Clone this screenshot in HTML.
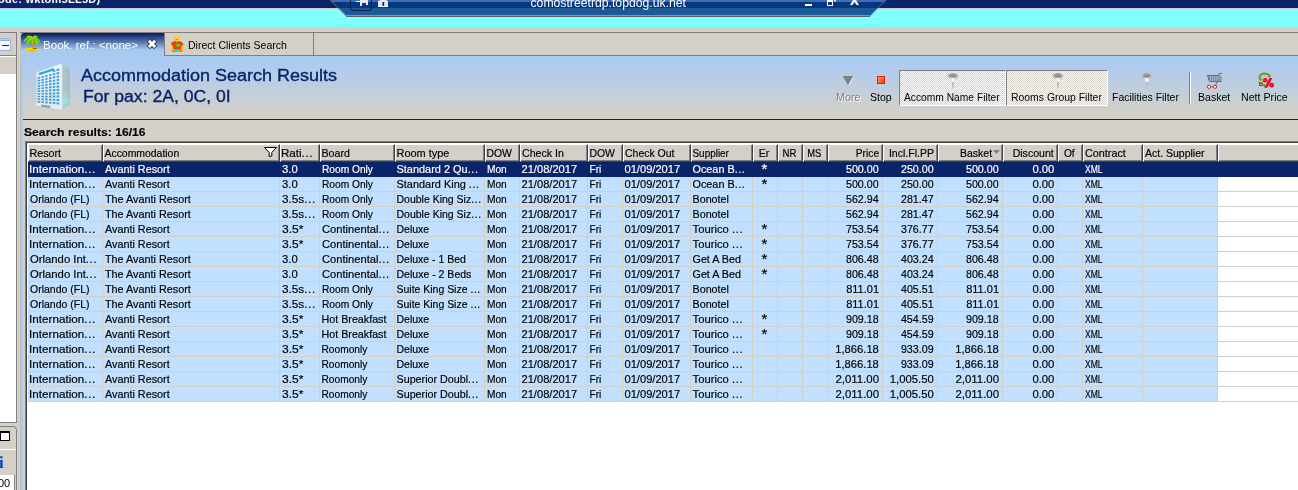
<!DOCTYPE html>
<html>
<head>
<meta charset="utf-8">
<title>Accommodation Search Results</title>
<style>
html,body{margin:0;padding:0;}
body{width:1298px;height:490px;overflow:hidden;position:relative;background:#d4d0c8;font-family:"Liberation Sans",sans-serif;font-size:11px;color:#000;}
.abs{position:absolute;}
.nw{white-space:nowrap;}
#navy{left:0;top:0;width:1298px;height:8px;background:#0a246a;}
#cyan{left:0;top:8px;width:1298px;height:19px;background:#80ffff;border-top:1px solid #c4ccd8;box-sizing:border-box;}
#titletxt{left:-2px;top:-7px;color:#fff;font-weight:bold;font-size:11px;line-height:13px;white-space:nowrap;letter-spacing:0.25px;}
/* left panel */
#lp-top{left:0;top:32px;width:16px;height:1px;background:#808080;}
#lp-right{left:16px;top:32px;width:1px;height:391px;background:#808080;}
#lp-white{left:0;top:74px;width:16px;height:348px;background:#fff;}
#lp-l55{left:0;top:55px;width:16px;height:1px;background:#808080;}
#lp-l56{left:0;top:56px;width:16px;height:1px;background:#fff;}
#lp-whitebot{left:0;top:422px;width:17px;height:1px;background:#808080;}
#lp2{left:-1px;top:426px;width:16px;height:70px;border:1px solid #808080;border-radius:0 4px 0 0;background:#d4d0c8;}
#lp2line{left:0;top:449px;width:16px;height:1px;background:#fff;}
#lp2i{left:-1px;top:454px;font-family:"Liberation Serif",serif;font-weight:bold;font-size:17px;color:#0046c8;line-height:18px;}
#lp2box{left:0;top:475px;width:14px;height:15px;background:#fff;border-right:1px solid #808080;}
#lp2txt{left:-2px;top:477px;font-size:11px;line-height:13px;}
/* splitter & content border */
#bluestrip{left:21px;top:50px;width:2px;height:440px;background:#a6caf0;}
#tbl-l1{left:25px;top:141px;width:1px;height:349px;background:#808080;}
#tbl-l2{left:26px;top:142px;width:1px;height:348px;background:#404040;}
#tbl-t1{left:25px;top:141px;width:1273px;height:1px;background:#808080;}
#tbl-t2{left:26px;top:142px;width:1272px;height:1px;background:#404040;}
#tblbg{left:27px;top:143px;width:1271px;height:347px;background:#fff;}
/* tab strip */
#tabline-top{left:20px;top:32px;width:1278px;height:1px;background:#808080;}
#tabline-bot{left:164px;top:55px;width:1134px;height:1px;background:#808080;}
#tab1{left:21px;top:33px;width:143px;height:23px;background:linear-gradient(#0a246a 0px,#0a246a 1px,#a6caf0 17px,#a6caf0 23px);border-radius:3px 0 0 0;color:#fff;}
#tab1 span{position:absolute;left:22px;top:6px;white-space:nowrap;line-height:13px;transform-origin:0 50%;transform:scaleX(1.05);}
#tab2l{left:164px;top:33px;width:1px;height:23px;background:#808080;}
#tab2r{left:313px;top:33px;width:1px;height:23px;background:#808080;}
#tab2 {left:188px;top:39px;white-space:nowrap;line-height:13px;transform-origin:0 50%;transform:scaleX(0.957);}
/* header */
#hdr{left:21px;top:56px;width:1277px;height:63px;background:linear-gradient(#a6caf0 0px,#abcbf3 6px,#d4d0c8 58px,#d4d0c8 63px);}
#hdrline{left:23px;top:119px;width:1275px;height:1px;background:#0a246a;}
#h1{left:81px;top:67px;font-size:16px;line-height:18px;color:#0a246a;white-space:nowrap;transform-origin:0 50%;transform:scaleX(1.125);word-spacing:0px;-webkit-text-stroke:0.35px #0a246a;}
#h2{left:82.5px;top:87.5px;font-size:16px;line-height:18px;color:#0a246a;white-space:nowrap;transform-origin:0 50%;transform:scaleX(1.10);-webkit-text-stroke:0.35px #0a246a;}
.tb{position:absolute;top:91px;white-space:nowrap;font-size:11px;line-height:13px;transform-origin:0 50%;}
.tbox{position:absolute;top:70px;height:36px;border:1px solid #fff;border-top-color:#808080;border-left-color:#808080;background:conic-gradient(#fff 25%,#d4d0c8 0 50%,#fff 0 75%,#d4d0c8 0) 0 0/2px 2px;box-sizing:border-box;}
#sr{left:24px;top:126px;font-weight:bold;white-space:nowrap;line-height:13px;transform-origin:0 50%;transform:scaleX(1.105);-webkit-text-stroke:0.15px #000;}
/* table */
#thead{left:28px;top:144px;width:1270px;height:18px;}
.th{position:absolute;top:0;height:18px;box-sizing:border-box;background:#d4d0c8;border-right:1px solid #404040;border-bottom:1px solid #404040;border-left:1px solid #fff;border-top:1px solid #fff;line-height:13px;white-space:nowrap;overflow:hidden;}
.th i{position:absolute;right:0;bottom:0;top:0;width:1px;background:#808080;}
.th b{position:absolute;left:0;right:0;bottom:0;height:1px;background:#808080;}
.th .hl{position:absolute;left:1px;right:3px;top:2px;}
.t{display:inline-block;white-space:nowrap;-webkit-text-stroke:0.18px currentColor;}
.t u{text-decoration:none;letter-spacing:0.6px;}
.r{position:absolute;left:28px;width:1190px;height:15px;background:#c1e0ff;white-space:nowrap;}
.r.sel{background:#0a246a;color:#fff;width:1270px;}
.c{position:absolute;top:0;height:15px;line-height:14px;box-sizing:border-box;padding:0 3px 0 2px;overflow:hidden;white-space:nowrap;border-right:1px solid #d4d0c8;border-bottom:1px solid #d4d0c8;}
.r.sel .c{border-color:#0a246a;}
.num{text-align:right;}
.er{text-align:center;}
.er .t{font-size:15px;line-height:14px;position:relative;top:0px;}
.gl{position:absolute;left:1218px;width:80px;height:1px;background:#d4d0c8;}
</style>
</head>
<body>
<div id="root" style="position:absolute;left:0;top:0;width:1298px;height:490px;overflow:hidden;will-change:transform;">
<div class="abs" id="cyan"></div>
<div class="abs" id="navy"></div>
<div class="abs" id="titletxt">ode: wktom5LL5D)</div>
<svg class="abs" style="left:326px;top:0" width="566" height="18" viewBox="326 0 566 18">
  <polygon points="330.5,0 886,0 869.7,16.5 346.5,16.5" fill="#1b5a99"/>
  <polygon points="330.5,0 886,0 884,2 332.5,2" fill="#3a6eb5"/>
  <polygon points="332.5,2 884,2 878,8 338.5,8" fill="#08367f"/>
  <polyline points="345.5,15.5 870.5,15.5" fill="none" stroke="#6c9bd0" stroke-width="1"/>
  <polyline points="330,0 346.5,16.5 869.7,16.5 886.2,0" fill="none" stroke="#5a6068" stroke-width="1"/>
  <polyline points="338.5,8 346,15.5" fill="none" stroke="#9fc0e8" stroke-width="0.8"/>
  <polyline points="878,8 870.5,15.5" fill="none" stroke="#9fc0e8" stroke-width="0.8"/>
  <!-- pin button -->
  <rect x="350.5" y="-4" width="21" height="14.5" rx="2.5" fill="none" stroke="#071c4a" stroke-width="1"/>
  <rect x="356" y="1" width="4" height="1" fill="#fff"/>
  <path d="M360 0 H368 V5 H366 V3 H362 V6 H360 Z" fill="#e8ebf5"/>
  <!-- lock -->
  <path d="M378 1 H388 V7 H378 Z" fill="#e4e7f2"/>
  <rect x="378" y="6" width="10" height="1" fill="#fff"/>
  <rect x="379.5" y="0" width="7.5" height="1" fill="#e4e7f2"/>
  <rect x="382.4" y="2" width="1.8" height="4" fill="#0a2a80"/>
  <!-- minimise -->
  <rect x="805" y="4" width="7" height="2" fill="#fff"/>
  <!-- restore -->
  <path d="M827 0 H833 V6 H827 Z M828 2 V5 H832 V2 Z" fill="#fff" fill-rule="evenodd"/>
  <path d="M834 0 H836 V1.5 H834 Z" fill="#e8ebf5"/>
  <!-- close -->
  <path d="M853 0 L850 5 H852.5 L854.5 2 L856.5 5 H859 L856 0 Z" fill="#f0f2f8"/>
  <text x="530.5" y="7" fill="#fff" font-family="Liberation Sans, sans-serif" font-size="12.2" textLength="155.5" lengthAdjust="spacing">comostreetrdp.topdog.uk.net</text>
</svg>


<div class="abs" id="lp-top"></div>
<div class="abs" id="lp-white"></div>
<div class="abs" id="lp-l55"></div>
<div class="abs" id="lp-l56"></div>
<div class="abs" id="lp-right"></div>
<div class="abs" id="lp-whitebot"></div>
<div class="abs" id="lp2"></div>
<div class="abs" id="lp2line"></div>
<div class="abs" id="lp2i">i</div>
<div class="abs" id="lp2box"></div>
<div class="abs" id="lp2txt">00</div>
<!-- left panel: minimize-ish button -->
<div class="abs" style="left:-1px;top:38px;width:10px;height:9px;background:#b4d0f0;border:1px solid #98b8e0;"></div>
<div class="abs" style="left:0px;top:40px;width:10px;height:9px;background:#f4f8ff;border:1px solid #98b0d8;border-left:none;"></div>
<div class="abs" style="left:2px;top:45px;width:7px;height:1px;background:#0a246a;"></div>
<!-- restore icon -->
<div class="abs" style="left:0px;top:431px;width:8px;height:7px;background:#fff;border:1px solid #000;border-top-width:2px;"></div>


<div class="abs" id="tabline-top"></div>
<div class="abs" id="tabline-bot"></div>
<div class="abs" id="hdr"></div>
<div class="abs" id="bluestrip"></div>
<div class="abs" style="left:20px;top:35px;width:1px;height:455px;background:#c0beb8;"></div>
<div class="abs" id="tab1"><span>Book. ref.: &lt;none&gt;</span></div>
<div class="abs" id="tab2l"></div>
<div class="abs" id="tab2r"></div>
<div class="abs" id="tab2">Direct Clients Search</div>
<svg class="abs" style="left:23px;top:34px" width="18" height="19" viewBox="23 34 18 19">
  <!-- island -->
  <ellipse cx="32" cy="49.8" rx="7.2" ry="2.1" fill="#ffd800"/>
  <ellipse cx="32" cy="50.6" rx="5" ry="1.4" fill="#f4c000"/>
  <!-- trunk -->
  <path d="M31.6 40 C32.2 43 33 46 32.6 49 L34.2 49 C34.6 46 33.8 43 33.4 40 Z" fill="#f0a810"/>
  <rect x="33" y="43.5" width="1" height="1" fill="#a04808"/>
  <rect x="32.4" y="46" width="1" height="1" fill="#a04808"/>
  <rect x="33" y="48" width="1" height="1" fill="#a04808"/>
  <rect x="34.5" y="48" width="2" height="1" fill="#704010"/>
  <!-- fronds -->
  <g fill="none" stroke-linecap="round">
    <path d="M32.5 38.5 C29 37 26 38.5 24.6 41" stroke="#6fd010" stroke-width="1.9"/>
    <path d="M32.2 39 C29.5 39 27.6 41 27.4 43.8" stroke="#8be000" stroke-width="1.9"/>
    <path d="M32.5 39 C31 40.5 30.6 42 30.8 43.4" stroke="#6fd010" stroke-width="1.6"/>
    <path d="M33 38.5 C36 37.2 38.6 39 39.6 42.4" stroke="#6fd010" stroke-width="1.9"/>
    <path d="M33.2 39.2 C35.4 39.6 37 41.4 37.4 44" stroke="#8be000" stroke-width="1.9"/>
    <path d="M33.2 39.4 C34.4 40.6 34.8 42 34.6 43.2" stroke="#58c010" stroke-width="1.5"/>
    <path d="M27.6 36.6 C29.6 36.2 31.6 36.8 32.8 38.2" stroke="#8be000" stroke-width="1.7"/>
    <path d="M33 38 C33.6 36.6 35.4 36.2 36.6 36.6" stroke="#8be000" stroke-width="1.7"/>
  </g>
</svg>
<!-- tab close X -->
<svg class="abs" style="left:145px;top:37px" width="14" height="14" viewBox="145 37 14 14">
  <g transform="translate(152 43.9)">
    <rect x="-5" y="-2.2" width="10" height="4.4" fill="#2c2c34" transform="rotate(45)"/>
    <rect x="-5" y="-2.2" width="10" height="4.4" fill="#2c2c34" transform="rotate(-45)"/>
    <rect x="-4.4" y="-1.4" width="8.8" height="2.8" fill="#fff" transform="rotate(45)"/>
    <rect x="-4.4" y="-1.4" width="8.8" height="2.8" fill="#fff" transform="rotate(-45)"/>
  </g>
</svg>
<!-- person icon -->
<svg class="abs" style="left:169px;top:35px" width="17" height="18" viewBox="169 35 17 18">
  <path d="M171 44.5 C171 42 173.5 41 176.8 41 C180 41 183.2 42 183.3 44.5 L182.5 51.5 H172 Z" fill="#f83c00"/>
  <path d="M170.2 46 C170.2 44.6 172.4 44.4 172.6 45.6 L174 50.4 L172.2 50.8 Z" fill="#ffd000"/>
  <path d="M184.3 46 C184.3 44.6 182 44.4 181.8 45.6 L180.4 50.4 L182.2 50.8 Z" fill="#ffd000"/>
  <rect x="176.3" y="44" width="3.9" height="2.6" fill="#30e040"/>
  <rect x="174" y="49.3" width="6" height="2.2" fill="#00e4f0"/>
  <rect x="176" y="40.2" width="1.6" height="2" fill="#ffb000"/>
  <circle cx="176.8" cy="38" r="2.5" fill="#ffc400"/>
  <circle cx="176.6" cy="37.4" r="1.1" fill="#fff0a0"/>
  <rect x="175.8" y="38.8" width="2" height="0.8" fill="#f06000"/>
</svg>

<div class="abs" id="hdrline"></div>
<svg class="abs" style="left:34px;top:62px" width="38" height="50" viewBox="34 62 38 50">
  <defs>
    <linearGradient id="bside" x1="0" y1="0" x2="1" y2="0">
      <stop offset="0" stop-color="#e4ecee"/><stop offset="0.3" stop-color="#b4c6cb"/><stop offset="1" stop-color="#a3bcc2"/>
    </linearGradient>
    <linearGradient id="bfront" x1="0" y1="0" x2="0" y2="1">
      <stop offset="0" stop-color="#eef3f6"/><stop offset="1" stop-color="#dde5e8"/>
    </linearGradient>
    <radialGradient id="bglow" cx="0.5" cy="0.5" r="0.5">
      <stop offset="0" stop-color="#9fe6ea" stop-opacity="0.95"/><stop offset="1" stop-color="#9fe6ea" stop-opacity="0"/>
    </radialGradient>
  </defs>
  <polygon points="60.3,64 69.8,68.6 69.8,104.6 60.3,110" fill="url(#bside)"/>
  <ellipse cx="65.5" cy="101" rx="5.5" ry="9" fill="url(#bglow)"/>
  <polygon points="60.3,64 61.6,64.6 61.6,109.3 60.3,110" fill="#f6fafb"/>
  <polygon points="36.5,72.5 60.3,64 60.3,110 36.5,106" fill="url(#bfront)"/>
  <polygon points="38.8,75.2 53.8,70.4 53.8,67.9 38.8,72.9" fill="#1fa8ec"/>
  <path d="M37.6 77.5 L40.1 76.8 L40.1 78.5 L37.6 79.0Z M37.6 80.1 L40.1 79.5 L40.1 81.1 L37.6 81.7Z M37.6 82.7 L40.1 82.2 L40.1 83.8 L37.6 84.3Z M37.6 85.3 L40.1 84.9 L40.1 86.5 L37.6 86.9Z M37.6 87.9 L40.1 87.6 L40.1 89.2 L37.6 89.5Z M37.6 90.5 L40.1 90.3 L40.1 91.9 L37.6 92.1Z M37.6 93.1 L40.1 93.0 L40.1 94.6 L37.6 94.7Z M37.6 95.7 L40.1 95.7 L40.1 97.3 L37.6 97.3Z M37.6 98.3 L40.1 98.4 L40.1 100.0 L37.6 99.9Z M37.6 100.9 L40.1 101.1 L40.1 102.7 L37.6 102.5Z M41.4 76.5 L43.9 75.9 L43.9 77.6 L41.4 78.1Z M41.4 79.2 L43.9 78.7 L43.9 80.4 L41.4 80.9Z M41.4 82.0 L43.9 81.5 L43.9 83.2 L41.4 83.6Z M41.4 84.7 L43.9 84.4 L43.9 86.1 L41.4 86.4Z M41.4 87.5 L43.9 87.2 L43.9 88.9 L41.4 89.1Z M41.4 90.2 L43.9 90.0 L43.9 91.7 L41.4 91.9Z M41.4 93.0 L43.9 92.8 L43.9 94.5 L41.4 94.6Z M41.4 95.7 L43.9 95.7 L43.9 97.4 L41.4 97.3Z M41.4 98.4 L43.9 98.5 L43.9 100.2 L41.4 100.1Z M41.4 101.2 L43.9 101.3 L43.9 103.0 L41.4 102.8Z M45.2 75.5 L47.7 74.9 L47.7 76.6 L45.2 77.2Z M45.2 78.4 L47.7 77.8 L47.7 79.6 L45.2 80.1Z M45.2 81.3 L47.7 80.8 L47.7 82.6 L45.2 83.0Z M45.2 84.2 L47.7 83.8 L47.7 85.6 L45.2 85.9Z M45.2 87.0 L47.7 86.8 L47.7 88.5 L45.2 88.8Z M45.2 89.9 L47.7 89.7 L47.7 91.5 L45.2 91.6Z M45.2 92.8 L47.7 92.7 L47.7 94.5 L45.2 94.5Z M45.2 95.7 L47.7 95.7 L47.7 97.4 L45.2 97.4Z M45.2 98.6 L47.7 98.6 L47.7 100.4 L45.2 100.3Z M45.2 101.4 L47.7 101.6 L47.7 103.4 L45.2 103.2Z M49.0 74.5 L51.5 73.9 L51.5 75.7 L49.0 76.3Z M49.0 77.5 L51.5 77.0 L51.5 78.9 L49.0 79.4Z M49.0 80.6 L51.5 80.1 L51.5 82.0 L49.0 82.4Z M49.0 83.6 L51.5 83.2 L51.5 85.1 L49.0 85.4Z M49.0 86.6 L51.5 86.3 L51.5 88.2 L49.0 88.4Z M49.0 89.6 L51.5 89.4 L51.5 91.3 L49.0 91.4Z M49.0 92.6 L51.5 92.5 L51.5 94.4 L49.0 94.5Z M49.0 95.7 L51.5 95.6 L51.5 97.5 L49.0 97.5Z M49.0 98.7 L51.5 98.8 L51.5 100.6 L49.0 100.5Z M49.0 101.7 L51.5 101.9 L51.5 103.7 L49.0 103.5Z M52.8 70.4 L55.3 69.6 L55.3 71.6 L52.8 72.3Z M52.8 73.5 L55.3 72.9 L55.3 74.8 L52.8 75.4Z M52.8 76.7 L55.3 76.1 L55.3 78.1 L52.8 78.6Z M52.8 79.9 L55.3 79.4 L55.3 81.3 L52.8 81.8Z M52.8 83.0 L55.3 82.6 L55.3 84.6 L52.8 84.9Z M52.8 86.2 L55.3 85.9 L55.3 87.8 L52.8 88.1Z M52.8 89.3 L55.3 89.1 L55.3 91.1 L52.8 91.2Z M52.8 92.5 L55.3 92.4 L55.3 94.3 L52.8 94.4Z M52.8 95.6 L55.3 95.6 L55.3 97.6 L52.8 97.5Z M52.8 98.8 L55.3 98.9 L55.3 100.8 L52.8 100.7Z M52.8 102.0 L55.3 102.1 L55.3 104.1 L52.8 103.8Z M56.6 69.3 L59.1 68.5 L59.1 70.6 L56.6 71.2Z M56.6 72.6 L59.1 71.9 L59.1 73.9 L56.6 74.5Z M56.6 75.9 L59.1 75.3 L59.1 77.3 L56.6 77.8Z M56.6 79.1 L59.1 78.7 L59.1 80.7 L56.6 81.1Z M56.6 82.4 L59.1 82.1 L59.1 84.1 L56.6 84.4Z M56.6 85.7 L59.1 85.5 L59.1 87.5 L56.6 87.7Z M56.6 89.0 L59.1 88.8 L59.1 90.9 L56.6 91.0Z M56.6 92.3 L59.1 92.2 L59.1 94.3 L56.6 94.3Z M56.6 95.6 L59.1 95.6 L59.1 97.6 L56.6 97.6Z M56.6 98.9 L59.1 99.0 L59.1 101.0 L56.6 100.9Z M56.6 102.2 L59.1 102.4 L59.1 104.4 L56.6 104.2Z" fill="#2f9ee6"/>
  <polygon points="36.5,103.6 60.3,106.8 60.3,110 36.5,106" fill="#e8eef0"/>
  <polygon points="41,104.6 50.5,106 50,108 41.5,106.5" fill="#8c979c"/>
  <polygon points="36.5,106 60.3,110 60.3,110.6 36.5,106.6" fill="#b0bcc0"/>
</svg>

<div class="abs" id="h1">Accommodation Search Results</div>
<div class="abs" id="h2">For pax: 2A, 0C, 0I</div>

<div class="tbox" style="left:899px;width:107px;"></div>
<div class="tbox" style="left:1006px;width:102px;"></div>
<div class="tb" style="left:836.5px;color:#fff;top:92px;transform:scaleX(0.98);">More</div>
<div class="tb" style="left:835.5px;color:#808080;transform:scaleX(0.98);">More</div>
<div class="tb" style="left:870px;transform:scaleX(0.96);">Stop</div>
<div class="tb" style="left:904px;transform:scaleX(0.932);">Accomm Name Filter</div>
<div class="tb" style="left:1011px;transform:scaleX(0.947);">Rooms Group Filter</div>
<div class="tb" style="left:1112px;transform:scaleX(0.952);">Facilities Filter</div>
<div class="tb" style="left:1198px;transform:scaleX(0.96);">Basket</div>
<div class="tb" style="left:1241px;transform:scaleX(0.968);">Nett Price</div>
<div class="abs" style="left:1189px;top:72px;width:1px;height:32px;background:#808080;"></div>
<div class="abs" style="left:1190px;top:72px;width:1px;height:32px;background:#fff;"></div>
<svg class="abs" style="left:840px;top:72px" width="440" height="18" viewBox="840 72 440 18">
  <defs>
    <linearGradient id="stopg" x1="0" y1="0" x2="1" y2="1">
      <stop offset="0" stop-color="#ff9a68"/><stop offset="1" stop-color="#f83808"/>
    </linearGradient>
    <linearGradient id="fcone" x1="0" y1="0" x2="1" y2="0">
      <stop offset="0" stop-color="#9a9a9a"/><stop offset="0.3" stop-color="#d8d8d8"/><stop offset="0.5" stop-color="#ffffff"/><stop offset="0.72" stop-color="#d0d0d0"/><stop offset="1" stop-color="#8c8c8c"/>
    </linearGradient>
    <linearGradient id="frim" x1="0" y1="0" x2="1" y2="0">
      <stop offset="0" stop-color="#c8c8c8"/><stop offset="0.5" stop-color="#9c9c9c"/><stop offset="1" stop-color="#d0d0d0"/>
    </linearGradient>
  </defs>
  <!-- more -->
  <path d="M843.6 77 L854.2 77 L849 86 Z" fill="#fff" opacity="0.5"/>
  <path d="M842.6 76 L853.2 76 L848 85.2 Z" fill="#808080"/>
  <!-- stop -->
  <rect x="877" y="76" width="8" height="8" fill="#e82000"/>
  <rect x="878" y="77" width="6" height="6" fill="url(#stopg)"/>
  <!-- funnels -->
  <g transform="translate(947.1 73)">
      <path d="M0.2 2.6 L4.7 9.6 L5.0 15.6 L6.6 15.6 L7.0 9.6 L11.6 2.6 Z" fill="url(#fcone)"/>
      <ellipse cx="5.9" cy="2.5" rx="5.8" ry="2.4" fill="url(#frim)"/>
      <ellipse cx="5.9" cy="2.8" rx="3.9" ry="1.4" fill="#8a8a8a" opacity="0.8"/>
      <path d="M5.1 9 L5.4 15.6 L6.4 15.6 L6.7 9 Z" fill="#a8a8a8"/>
  </g>
  <g transform="translate(1052.1 73)">
      <path d="M0.2 2.6 L4.7 9.6 L5.0 15.6 L6.6 15.6 L7.0 9.6 L11.6 2.6 Z" fill="url(#fcone)"/>
      <ellipse cx="5.9" cy="2.5" rx="5.8" ry="2.4" fill="url(#frim)"/>
      <ellipse cx="5.9" cy="2.8" rx="3.9" ry="1.4" fill="#8a8a8a" opacity="0.8"/>
      <path d="M5.1 9 L5.4 15.6 L6.4 15.6 L6.7 9 Z" fill="#a8a8a8"/>
  </g>
  <g transform="translate(1141 73)">
      <path d="M0.2 2.6 L4.7 9.6 L5.0 15.6 L6.6 15.6 L7.0 9.6 L11.6 2.6 Z" fill="url(#fcone)"/>
      <ellipse cx="5.9" cy="2.5" rx="5.8" ry="2.4" fill="url(#frim)"/>
      <ellipse cx="5.9" cy="2.8" rx="3.9" ry="1.4" fill="#8a8a8a" opacity="0.8"/>
      <path d="M5.1 9 L5.4 15.6 L6.4 15.6 L6.7 9 Z" fill="#a8a8a8"/>
  </g>
  <!-- basket cart -->
  <g fill="none" stroke="#6c6c6c" stroke-width="1">
    <path d="M1222 73.5 H1219 V81.5"/>
    <path d="M1207 75.5 H1219"/>
    <path d="M1207.6 75.5 L1209.4 81.5 H1221.3"/>
    <path d="M1209.5 76 V80 M1211.4 76 V81.5 M1213.3 76 V81.5 M1215.2 76 V81.5 M1217.1 76 V81.5 M1220.9 76 V81.5" stroke-width="0.9"/>
    <path d="M1217.5 81.5 L1215.6 85"/>
    <path d="M1211 86.7 H1213"/>
  </g>
  <circle cx="1209" cy="86.8" r="1.6" fill="#fff" stroke="#f00000" stroke-width="0.9"/>
  <circle cx="1215.1" cy="86.8" r="1.6" fill="#fff" stroke="#f00000" stroke-width="0.9"/>
  <!-- nett price -->
  <g fill="none" stroke-linecap="round">
    <path d="M1260.6 79.4 C1258.6 76.4 1261.4 73.8 1264.6 73.9 C1267 74 1268.6 75 1269.4 76.4" stroke="#6aa020" stroke-width="2.7"/>
    <path d="M1261.2 78 C1260.4 76.4 1262.4 75 1264.6 75.1 C1266 75.2 1267 75.6 1267.8 76.4" stroke="#b4d88c" stroke-width="1.1"/>
    <path d="M1258.6 82.4 H1262.6" stroke="#6aa020" stroke-width="1.2"/>
    <path d="M1264 84.6 C1264.2 86 1265 86.6 1266 86.6" stroke="#6aa020" stroke-width="1.8"/>
  </g>
  <rect x="1259" y="83.2" width="3.8" height="2.8" fill="#f00018"/>
  <rect x="1259.9" y="84.2" width="1.9" height="0.9" fill="#ffd0d0"/>
  <g fill="#f00018">
    <circle cx="1265.2" cy="80.2" r="2.3"/>
    <circle cx="1271.6" cy="85.2" r="2.4"/>
    <path d="M1269.6 78 L1272.4 78 L1267.2 87.7 L1264.4 87.7 Z"/>
  </g>
  <circle cx="1265.2" cy="80.2" r="0.7" fill="#ff6070"/>
  <circle cx="1271.6" cy="85.2" r="0.7" fill="#ff6070"/>
</svg>


<div class="abs" id="sr">Search results: 16/16</div>
<div class="abs" id="tbl-t1"></div>
<div class="abs" id="tbl-t2"></div>
<div class="abs" id="tbl-l1"></div>
<div class="abs" id="tbl-l2"></div>
<div class="abs" id="tblbg"></div>
<div class="abs" id="thead">
<div class="th" style="left:0px;width:75px;"><span class="hl" style=""><span class="t" style="transform-origin:0 50%;transform:translateX(-0.5px) scaleX(0.975);">Resort</span></span><i></i><b></b></div>
<div class="th" style="left:75px;width:177px;"><span class="hl" style=""><span class="t" style="transform-origin:0 50%;transform:translateX(-0.5px) scaleX(0.9468);">Accommodation</span></span><svg style="position:absolute;right:1px;top:2px" width="14" height="11" viewBox="0 0 14 11"><path d="M0.5 0.5 H12.5 L7.8 5.5 V9 L5.2 9.6 V5.5 Z" fill="#fff" stroke="#000" stroke-width="1"/></svg><i></i><b></b></div>
<div class="th" style="left:252px;width:40px;"><span class="hl" style=""><span class="t" style="transform-origin:0 50%;transform:translateX(-1.0px) scaleX(1.0536);">Rati<u>...</u></span></span><i></i><b></b></div>
<div class="th" style="left:292px;width:75px;"><span class="hl" style=""><span class="t" style="transform-origin:0 50%;transform:translateX(-0.5px) scaleX(0.9679);">Board</span></span><i></i><b></b></div>
<div class="th" style="left:367px;width:90px;"><span class="hl" style=""><span class="t" style="transform-origin:0 50%;transform:translateX(-0.5px) scaleX(0.9942);">Room type</span></span><i></i><b></b></div>
<div class="th" style="left:457px;width:35px;"><span class="hl" style=""><span class="t" style="transform-origin:0 50%;transform:translateX(-0.5px) scaleX(0.9462);">DOW</span></span><i></i><b></b></div>
<div class="th" style="left:492px;width:68px;"><span class="hl" style=""><span class="t" style="transform-origin:0 50%;transform:translateX(0.0px) scaleX(0.9674);">Check In</span></span><i></i><b></b></div>
<div class="th" style="left:560px;width:35px;"><span class="hl" style=""><span class="t" style="transform-origin:0 50%;transform:translateX(-0.5px) scaleX(0.9423);">DOW</span></span><i></i><b></b></div>
<div class="th" style="left:595px;width:68px;"><span class="hl" style=""><span class="t" style="transform-origin:0 50%;transform:translateX(0.0px) scaleX(0.9519);">Check Out</span></span><i></i><b></b></div>
<div class="th" style="left:663px;width:62px;"><span class="hl" style=""><span class="t" style="transform-origin:0 50%;transform:translateX(-0.5px) scaleX(0.9024);">Supplier</span></span><i></i><b></b></div>
<div class="th" style="left:725px;width:25px;"><span class="hl" style="text-align:center;"><span class="t" style="transform-origin:50% 50%;transform:translateX(-0.5px) scaleX(0.97);">Er</span></span><i></i><b></b></div>
<div class="th" style="left:750px;width:25px;"><span class="hl" style="text-align:center;"><span class="t" style="transform-origin:50% 50%;transform:translateX(-0.5px) scaleX(0.8733);">NR</span></span><i></i><b></b></div>
<div class="th" style="left:775px;width:25px;"><span class="hl" style="text-align:center;"><span class="t" style="transform-origin:50% 50%;transform:translateX(0.0px) scaleX(0.8562);">MS</span></span><i></i><b></b></div>
<div class="th" style="left:800px;width:55px;"><span class="hl" style="text-align:right;"><span class="t" style="transform-origin:100% 50%;transform:translateX(0.0px) scaleX(0.9292);">Price</span></span><i></i><b></b></div>
<div class="th" style="left:855px;width:55px;"><span class="hl" style="text-align:right;"><span class="t" style="transform-origin:100% 50%;transform:translateX(0.0px) scaleX(0.9587);">Incl.Fl.PP</span></span><i></i><b></b></div>
<div class="th" style="left:910px;width:65px;"><span class="hl" style="text-align:right;right:10px;"><span class="t" style="transform-origin:100% 50%;transform:translateX(0.5px) scaleX(0.9545);">Basket</span></span><svg style="position:absolute;right:2px;top:5px" width="7" height="4" viewBox="0 0 7 4"><path d="M0 0 H7 L3.5 4 Z" fill="#808080"/></svg><i></i><b></b></div>
<div class="th" style="left:975px;width:55px;"><span class="hl" style="text-align:right;"><span class="t" style="transform-origin:100% 50%;transform:translateX(0.0px) scaleX(0.9619);">Discount</span></span><i></i><b></b></div>
<div class="th" style="left:1030px;width:25px;"><span class="hl" style="text-align:center;"><span class="t" style="transform-origin:50% 50%;transform:translateX(-0.5px) scaleX(0.925);">Of</span></span><i></i><b></b></div>
<div class="th" style="left:1055px;width:60px;"><span class="hl" style=""><span class="t" style="transform-origin:0 50%;transform:translateX(0.0px) scaleX(0.9833);">Contract</span></span><i></i><b></b></div>
<div class="th" style="left:1115px;width:75px;"><span class="hl" style=""><span class="t" style="transform-origin:0 50%;transform:translateX(0.0px) scaleX(0.954);">Act. Supplier</span></span><i></i><b></b></div>
<div class="th" style="left:1190px;width:84px;"><b></b></div>
</div>
<div id="rows">
<div class="r sel" style="top:162px;"><div class="c" style="left:0px;width:75px;"><span class="t" style="transform-origin:0 50%;transform:translateX(-1.0px) scaleX(1.0639);">Internation<u>...</u></span></div><div class="c" style="left:75px;width:177px;"><span class="t" style="transform-origin:0 50%;transform:translateX(0.0px) scaleX(0.9833);">Avanti Resort</span></div><div class="c" style="left:252px;width:40px;"><span class="t" style="transform-origin:0 50%;transform:translateX(0.0px) scaleX(1.0267);">3.0</span></div><div class="c" style="left:292px;width:75px;"><span class="t" style="transform-origin:0 50%;transform:translateX(0.0px) scaleX(0.9255);">Room Only</span></div><div class="c" style="left:367px;width:90px;"><span class="t" style="transform-origin:0 50%;transform:translateX(-0.5px) scaleX(0.9951);">Standard 2 Qu<u>...</u></span></div><div class="c" style="left:457px;width:35px;"><span class="t" style="transform-origin:0 50%;transform:translateX(0.0px) scaleX(0.9238);">Mon</span></div><div class="c" style="left:492px;width:68px;"><span class="t" style="transform-origin:0 50%;transform:translateX(-0.5px) scaleX(1.0109);">21/08/2017</span></div><div class="c" style="left:560px;width:35px;"><span class="t" style="transform-origin:0 50%;transform:translateX(-0.5px) scaleX(0.9154);">Fri</span></div><div class="c" style="left:595px;width:68px;"><span class="t" style="transform-origin:0 50%;transform:translateX(-0.5px) scaleX(1.0109);">01/09/2017</span></div><div class="c" style="left:663px;width:62px;"><span class="t" style="transform-origin:0 50%;transform:translateX(-0.5px) scaleX(0.9846);">Ocean B<u>...</u></span></div><div class="c er" style="left:725px;width:25px;"><span class="t" style="">*</span></div><div class="c" style="left:750px;width:25px;"></div><div class="c" style="left:775px;width:25px;"></div><div class="c num" style="left:800px;width:55px;"><span class="t" style="transform-origin:100% 50%;transform:translateX(0.0px) scaleX(0.9706);">500.00</span></div><div class="c num" style="left:855px;width:55px;"><span class="t" style="transform-origin:100% 50%;transform:translateX(0.0px) scaleX(0.9706);">250.00</span></div><div class="c num" style="left:910px;width:65px;"><span class="t" style="transform-origin:100% 50%;transform:translateX(0.0px) scaleX(0.9706);">500.00</span></div><div class="c num" style="left:975px;width:55px;"><span class="t" style="transform-origin:100% 50%;transform:translateX(0.0px) scaleX(1.0286);">0.00</span></div><div class="c" style="left:1030px;width:25px;"></div><div class="c" style="left:1055px;width:60px;"><span class="t" style="transform-origin:0 50%;transform:translateX(0.0px) scaleX(0.7783);">XML</span></div><div class="c" style="left:1115px;width:75px;"></div></div>
<div class="r" style="top:177px;"><div class="c" style="left:0px;width:75px;"><span class="t" style="transform-origin:0 50%;transform:translateX(-1.0px) scaleX(1.0639);">Internation<u>...</u></span></div><div class="c" style="left:75px;width:177px;"><span class="t" style="transform-origin:0 50%;transform:translateX(0.0px) scaleX(0.9833);">Avanti Resort</span></div><div class="c" style="left:252px;width:40px;"><span class="t" style="transform-origin:0 50%;transform:translateX(0.0px) scaleX(1.0267);">3.0</span></div><div class="c" style="left:292px;width:75px;"><span class="t" style="transform-origin:0 50%;transform:translateX(0.0px) scaleX(0.9255);">Room Only</span></div><div class="c" style="left:367px;width:90px;"><span class="t" style="transform-origin:0 50%;transform:translateX(-0.5px) scaleX(0.9939);">Standard King <u>...</u></span></div><div class="c" style="left:457px;width:35px;"><span class="t" style="transform-origin:0 50%;transform:translateX(0.0px) scaleX(0.9238);">Mon</span></div><div class="c" style="left:492px;width:68px;"><span class="t" style="transform-origin:0 50%;transform:translateX(-0.5px) scaleX(1.0109);">21/08/2017</span></div><div class="c" style="left:560px;width:35px;"><span class="t" style="transform-origin:0 50%;transform:translateX(-0.5px) scaleX(0.9154);">Fri</span></div><div class="c" style="left:595px;width:68px;"><span class="t" style="transform-origin:0 50%;transform:translateX(-0.5px) scaleX(1.0109);">01/09/2017</span></div><div class="c" style="left:663px;width:62px;"><span class="t" style="transform-origin:0 50%;transform:translateX(-0.5px) scaleX(0.9846);">Ocean B<u>...</u></span></div><div class="c er" style="left:725px;width:25px;"><span class="t" style="">*</span></div><div class="c" style="left:750px;width:25px;"></div><div class="c" style="left:775px;width:25px;"></div><div class="c num" style="left:800px;width:55px;"><span class="t" style="transform-origin:100% 50%;transform:translateX(0.0px) scaleX(0.9706);">500.00</span></div><div class="c num" style="left:855px;width:55px;"><span class="t" style="transform-origin:100% 50%;transform:translateX(0.0px) scaleX(0.9706);">250.00</span></div><div class="c num" style="left:910px;width:65px;"><span class="t" style="transform-origin:100% 50%;transform:translateX(0.0px) scaleX(0.9706);">500.00</span></div><div class="c num" style="left:975px;width:55px;"><span class="t" style="transform-origin:100% 50%;transform:translateX(0.0px) scaleX(1.0286);">0.00</span></div><div class="c" style="left:1030px;width:25px;"></div><div class="c" style="left:1055px;width:60px;"><span class="t" style="transform-origin:0 50%;transform:translateX(0.0px) scaleX(0.7783);">XML</span></div><div class="c" style="left:1115px;width:75px;"></div></div>
<div class="gl" style="top:191px;"></div>
<div class="r" style="top:192px;"><div class="c" style="left:0px;width:75px;"><span class="t" style="transform-origin:0 50%;transform:translateX(0.0px) scaleX(0.9548);">Orlando (FL)</span></div><div class="c" style="left:75px;width:177px;"><span class="t" style="transform-origin:0 50%;transform:translateX(0.0px) scaleX(0.983);">The Avanti Resort</span></div><div class="c" style="left:252px;width:40px;"><span class="t" style="transform-origin:0 50%;transform:translateX(0.0px) scaleX(1.0667);">3.5s<u>...</u></span></div><div class="c" style="left:292px;width:75px;"><span class="t" style="transform-origin:0 50%;transform:translateX(0.0px) scaleX(0.9255);">Room Only</span></div><div class="c" style="left:367px;width:90px;"><span class="t" style="transform-origin:0 50%;transform:translateX(-0.5px) scaleX(0.954);">Double King Siz<u>...</u></span></div><div class="c" style="left:457px;width:35px;"><span class="t" style="transform-origin:0 50%;transform:translateX(0.0px) scaleX(0.9238);">Mon</span></div><div class="c" style="left:492px;width:68px;"><span class="t" style="transform-origin:0 50%;transform:translateX(-0.5px) scaleX(1.0109);">21/08/2017</span></div><div class="c" style="left:560px;width:35px;"><span class="t" style="transform-origin:0 50%;transform:translateX(-0.5px) scaleX(0.9154);">Fri</span></div><div class="c" style="left:595px;width:68px;"><span class="t" style="transform-origin:0 50%;transform:translateX(-0.5px) scaleX(1.0109);">01/09/2017</span></div><div class="c" style="left:663px;width:62px;"><span class="t" style="transform-origin:0 50%;transform:translateX(-0.5px) scaleX(0.9757);">Bonotel</span></div><div class="c er" style="left:725px;width:25px;"></div><div class="c" style="left:750px;width:25px;"></div><div class="c" style="left:775px;width:25px;"></div><div class="c num" style="left:800px;width:55px;"><span class="t" style="transform-origin:100% 50%;transform:translateX(0.0px) scaleX(0.9706);">562.94</span></div><div class="c num" style="left:855px;width:55px;"><span class="t" style="transform-origin:100% 50%;transform:translateX(0.0px) scaleX(0.9706);">281.47</span></div><div class="c num" style="left:910px;width:65px;"><span class="t" style="transform-origin:100% 50%;transform:translateX(0.0px) scaleX(0.9706);">562.94</span></div><div class="c num" style="left:975px;width:55px;"><span class="t" style="transform-origin:100% 50%;transform:translateX(0.0px) scaleX(1.0286);">0.00</span></div><div class="c" style="left:1030px;width:25px;"></div><div class="c" style="left:1055px;width:60px;"><span class="t" style="transform-origin:0 50%;transform:translateX(0.0px) scaleX(0.7783);">XML</span></div><div class="c" style="left:1115px;width:75px;"></div></div>
<div class="gl" style="top:206px;"></div>
<div class="r" style="top:207px;"><div class="c" style="left:0px;width:75px;"><span class="t" style="transform-origin:0 50%;transform:translateX(0.0px) scaleX(0.9548);">Orlando (FL)</span></div><div class="c" style="left:75px;width:177px;"><span class="t" style="transform-origin:0 50%;transform:translateX(0.0px) scaleX(0.983);">The Avanti Resort</span></div><div class="c" style="left:252px;width:40px;"><span class="t" style="transform-origin:0 50%;transform:translateX(0.0px) scaleX(1.0667);">3.5s<u>...</u></span></div><div class="c" style="left:292px;width:75px;"><span class="t" style="transform-origin:0 50%;transform:translateX(0.0px) scaleX(0.9255);">Room Only</span></div><div class="c" style="left:367px;width:90px;"><span class="t" style="transform-origin:0 50%;transform:translateX(-0.5px) scaleX(0.954);">Double King Siz<u>...</u></span></div><div class="c" style="left:457px;width:35px;"><span class="t" style="transform-origin:0 50%;transform:translateX(0.0px) scaleX(0.9238);">Mon</span></div><div class="c" style="left:492px;width:68px;"><span class="t" style="transform-origin:0 50%;transform:translateX(-0.5px) scaleX(1.0109);">21/08/2017</span></div><div class="c" style="left:560px;width:35px;"><span class="t" style="transform-origin:0 50%;transform:translateX(-0.5px) scaleX(0.9154);">Fri</span></div><div class="c" style="left:595px;width:68px;"><span class="t" style="transform-origin:0 50%;transform:translateX(-0.5px) scaleX(1.0109);">01/09/2017</span></div><div class="c" style="left:663px;width:62px;"><span class="t" style="transform-origin:0 50%;transform:translateX(-0.5px) scaleX(0.9757);">Bonotel</span></div><div class="c er" style="left:725px;width:25px;"></div><div class="c" style="left:750px;width:25px;"></div><div class="c" style="left:775px;width:25px;"></div><div class="c num" style="left:800px;width:55px;"><span class="t" style="transform-origin:100% 50%;transform:translateX(0.0px) scaleX(0.9706);">562.94</span></div><div class="c num" style="left:855px;width:55px;"><span class="t" style="transform-origin:100% 50%;transform:translateX(0.0px) scaleX(0.9706);">281.47</span></div><div class="c num" style="left:910px;width:65px;"><span class="t" style="transform-origin:100% 50%;transform:translateX(0.0px) scaleX(0.9706);">562.94</span></div><div class="c num" style="left:975px;width:55px;"><span class="t" style="transform-origin:100% 50%;transform:translateX(0.0px) scaleX(1.0286);">0.00</span></div><div class="c" style="left:1030px;width:25px;"></div><div class="c" style="left:1055px;width:60px;"><span class="t" style="transform-origin:0 50%;transform:translateX(0.0px) scaleX(0.7783);">XML</span></div><div class="c" style="left:1115px;width:75px;"></div></div>
<div class="gl" style="top:221px;"></div>
<div class="r" style="top:222px;"><div class="c" style="left:0px;width:75px;"><span class="t" style="transform-origin:0 50%;transform:translateX(-1.0px) scaleX(1.0639);">Internation<u>...</u></span></div><div class="c" style="left:75px;width:177px;"><span class="t" style="transform-origin:0 50%;transform:translateX(0.0px) scaleX(0.9833);">Avanti Resort</span></div><div class="c" style="left:252px;width:40px;"><span class="t" style="transform-origin:0 50%;transform:translateX(0.0px) scaleX(1.095);">3.5*</span></div><div class="c" style="left:292px;width:75px;"><span class="t" style="transform-origin:0 50%;transform:translateX(0.0px) scaleX(1.0154);">Continental<u>...</u></span></div><div class="c" style="left:367px;width:90px;"><span class="t" style="transform-origin:0 50%;transform:translateX(-0.5px) scaleX(0.9529);">Deluxe</span></div><div class="c" style="left:457px;width:35px;"><span class="t" style="transform-origin:0 50%;transform:translateX(0.0px) scaleX(0.9238);">Mon</span></div><div class="c" style="left:492px;width:68px;"><span class="t" style="transform-origin:0 50%;transform:translateX(-0.5px) scaleX(1.0109);">21/08/2017</span></div><div class="c" style="left:560px;width:35px;"><span class="t" style="transform-origin:0 50%;transform:translateX(-0.5px) scaleX(0.9154);">Fri</span></div><div class="c" style="left:595px;width:68px;"><span class="t" style="transform-origin:0 50%;transform:translateX(-0.5px) scaleX(1.0109);">01/09/2017</span></div><div class="c" style="left:663px;width:62px;"><span class="t" style="transform-origin:0 50%;transform:translateX(-0.5px) scaleX(1.0229);">Tourico <u>...</u></span></div><div class="c er" style="left:725px;width:25px;"><span class="t" style="">*</span></div><div class="c" style="left:750px;width:25px;"></div><div class="c" style="left:775px;width:25px;"></div><div class="c num" style="left:800px;width:55px;"><span class="t" style="transform-origin:100% 50%;transform:translateX(0.0px) scaleX(0.9706);">753.54</span></div><div class="c num" style="left:855px;width:55px;"><span class="t" style="transform-origin:100% 50%;transform:translateX(0.0px) scaleX(0.9706);">376.77</span></div><div class="c num" style="left:910px;width:65px;"><span class="t" style="transform-origin:100% 50%;transform:translateX(0.0px) scaleX(0.9706);">753.54</span></div><div class="c num" style="left:975px;width:55px;"><span class="t" style="transform-origin:100% 50%;transform:translateX(0.0px) scaleX(1.0286);">0.00</span></div><div class="c" style="left:1030px;width:25px;"></div><div class="c" style="left:1055px;width:60px;"><span class="t" style="transform-origin:0 50%;transform:translateX(0.0px) scaleX(0.7783);">XML</span></div><div class="c" style="left:1115px;width:75px;"></div></div>
<div class="gl" style="top:236px;"></div>
<div class="r" style="top:237px;"><div class="c" style="left:0px;width:75px;"><span class="t" style="transform-origin:0 50%;transform:translateX(-1.0px) scaleX(1.0639);">Internation<u>...</u></span></div><div class="c" style="left:75px;width:177px;"><span class="t" style="transform-origin:0 50%;transform:translateX(0.0px) scaleX(0.9833);">Avanti Resort</span></div><div class="c" style="left:252px;width:40px;"><span class="t" style="transform-origin:0 50%;transform:translateX(0.0px) scaleX(1.095);">3.5*</span></div><div class="c" style="left:292px;width:75px;"><span class="t" style="transform-origin:0 50%;transform:translateX(0.0px) scaleX(1.0154);">Continental<u>...</u></span></div><div class="c" style="left:367px;width:90px;"><span class="t" style="transform-origin:0 50%;transform:translateX(-0.5px) scaleX(0.9529);">Deluxe</span></div><div class="c" style="left:457px;width:35px;"><span class="t" style="transform-origin:0 50%;transform:translateX(0.0px) scaleX(0.9238);">Mon</span></div><div class="c" style="left:492px;width:68px;"><span class="t" style="transform-origin:0 50%;transform:translateX(-0.5px) scaleX(1.0109);">21/08/2017</span></div><div class="c" style="left:560px;width:35px;"><span class="t" style="transform-origin:0 50%;transform:translateX(-0.5px) scaleX(0.9154);">Fri</span></div><div class="c" style="left:595px;width:68px;"><span class="t" style="transform-origin:0 50%;transform:translateX(-0.5px) scaleX(1.0109);">01/09/2017</span></div><div class="c" style="left:663px;width:62px;"><span class="t" style="transform-origin:0 50%;transform:translateX(-0.5px) scaleX(1.0229);">Tourico <u>...</u></span></div><div class="c er" style="left:725px;width:25px;"><span class="t" style="">*</span></div><div class="c" style="left:750px;width:25px;"></div><div class="c" style="left:775px;width:25px;"></div><div class="c num" style="left:800px;width:55px;"><span class="t" style="transform-origin:100% 50%;transform:translateX(0.0px) scaleX(0.9706);">753.54</span></div><div class="c num" style="left:855px;width:55px;"><span class="t" style="transform-origin:100% 50%;transform:translateX(0.0px) scaleX(0.9706);">376.77</span></div><div class="c num" style="left:910px;width:65px;"><span class="t" style="transform-origin:100% 50%;transform:translateX(0.0px) scaleX(0.9706);">753.54</span></div><div class="c num" style="left:975px;width:55px;"><span class="t" style="transform-origin:100% 50%;transform:translateX(0.0px) scaleX(1.0286);">0.00</span></div><div class="c" style="left:1030px;width:25px;"></div><div class="c" style="left:1055px;width:60px;"><span class="t" style="transform-origin:0 50%;transform:translateX(0.0px) scaleX(0.7783);">XML</span></div><div class="c" style="left:1115px;width:75px;"></div></div>
<div class="gl" style="top:251px;"></div>
<div class="r" style="top:252px;"><div class="c" style="left:0px;width:75px;"><span class="t" style="transform-origin:0 50%;transform:translateX(0.0px) scaleX(1.0266);">Orlando Int<u>...</u></span></div><div class="c" style="left:75px;width:177px;"><span class="t" style="transform-origin:0 50%;transform:translateX(0.0px) scaleX(0.983);">The Avanti Resort</span></div><div class="c" style="left:252px;width:40px;"><span class="t" style="transform-origin:0 50%;transform:translateX(0.0px) scaleX(1.0267);">3.0</span></div><div class="c" style="left:292px;width:75px;"><span class="t" style="transform-origin:0 50%;transform:translateX(0.0px) scaleX(1.0154);">Continental<u>...</u></span></div><div class="c" style="left:367px;width:90px;"><span class="t" style="transform-origin:0 50%;transform:translateX(-0.5px) scaleX(0.9534);">Deluxe - 1 Bed</span></div><div class="c" style="left:457px;width:35px;"><span class="t" style="transform-origin:0 50%;transform:translateX(0.0px) scaleX(0.9238);">Mon</span></div><div class="c" style="left:492px;width:68px;"><span class="t" style="transform-origin:0 50%;transform:translateX(-0.5px) scaleX(1.0109);">21/08/2017</span></div><div class="c" style="left:560px;width:35px;"><span class="t" style="transform-origin:0 50%;transform:translateX(-0.5px) scaleX(0.9154);">Fri</span></div><div class="c" style="left:595px;width:68px;"><span class="t" style="transform-origin:0 50%;transform:translateX(-0.5px) scaleX(1.0109);">01/09/2017</span></div><div class="c" style="left:663px;width:62px;"><span class="t" style="transform-origin:0 50%;transform:translateX(-0.5px) scaleX(0.9796);">Get A Bed</span></div><div class="c er" style="left:725px;width:25px;"><span class="t" style="">*</span></div><div class="c" style="left:750px;width:25px;"></div><div class="c" style="left:775px;width:25px;"></div><div class="c num" style="left:800px;width:55px;"><span class="t" style="transform-origin:100% 50%;transform:translateX(0.0px) scaleX(0.9706);">806.48</span></div><div class="c num" style="left:855px;width:55px;"><span class="t" style="transform-origin:100% 50%;transform:translateX(0.0px) scaleX(0.9706);">403.24</span></div><div class="c num" style="left:910px;width:65px;"><span class="t" style="transform-origin:100% 50%;transform:translateX(0.0px) scaleX(0.9706);">806.48</span></div><div class="c num" style="left:975px;width:55px;"><span class="t" style="transform-origin:100% 50%;transform:translateX(0.0px) scaleX(1.0286);">0.00</span></div><div class="c" style="left:1030px;width:25px;"></div><div class="c" style="left:1055px;width:60px;"><span class="t" style="transform-origin:0 50%;transform:translateX(0.0px) scaleX(0.7783);">XML</span></div><div class="c" style="left:1115px;width:75px;"></div></div>
<div class="gl" style="top:266px;"></div>
<div class="r" style="top:267px;"><div class="c" style="left:0px;width:75px;"><span class="t" style="transform-origin:0 50%;transform:translateX(0.0px) scaleX(1.0266);">Orlando Int<u>...</u></span></div><div class="c" style="left:75px;width:177px;"><span class="t" style="transform-origin:0 50%;transform:translateX(0.0px) scaleX(0.983);">The Avanti Resort</span></div><div class="c" style="left:252px;width:40px;"><span class="t" style="transform-origin:0 50%;transform:translateX(0.0px) scaleX(1.0267);">3.0</span></div><div class="c" style="left:292px;width:75px;"><span class="t" style="transform-origin:0 50%;transform:translateX(0.0px) scaleX(1.0154);">Continental<u>...</u></span></div><div class="c" style="left:367px;width:90px;"><span class="t" style="transform-origin:0 50%;transform:translateX(-0.5px) scaleX(0.9564);">Deluxe - 2 Beds</span></div><div class="c" style="left:457px;width:35px;"><span class="t" style="transform-origin:0 50%;transform:translateX(0.0px) scaleX(0.9238);">Mon</span></div><div class="c" style="left:492px;width:68px;"><span class="t" style="transform-origin:0 50%;transform:translateX(-0.5px) scaleX(1.0109);">21/08/2017</span></div><div class="c" style="left:560px;width:35px;"><span class="t" style="transform-origin:0 50%;transform:translateX(-0.5px) scaleX(0.9154);">Fri</span></div><div class="c" style="left:595px;width:68px;"><span class="t" style="transform-origin:0 50%;transform:translateX(-0.5px) scaleX(1.0109);">01/09/2017</span></div><div class="c" style="left:663px;width:62px;"><span class="t" style="transform-origin:0 50%;transform:translateX(-0.5px) scaleX(0.9796);">Get A Bed</span></div><div class="c er" style="left:725px;width:25px;"><span class="t" style="">*</span></div><div class="c" style="left:750px;width:25px;"></div><div class="c" style="left:775px;width:25px;"></div><div class="c num" style="left:800px;width:55px;"><span class="t" style="transform-origin:100% 50%;transform:translateX(0.0px) scaleX(0.9706);">806.48</span></div><div class="c num" style="left:855px;width:55px;"><span class="t" style="transform-origin:100% 50%;transform:translateX(0.0px) scaleX(0.9706);">403.24</span></div><div class="c num" style="left:910px;width:65px;"><span class="t" style="transform-origin:100% 50%;transform:translateX(0.0px) scaleX(0.9706);">806.48</span></div><div class="c num" style="left:975px;width:55px;"><span class="t" style="transform-origin:100% 50%;transform:translateX(0.0px) scaleX(1.0286);">0.00</span></div><div class="c" style="left:1030px;width:25px;"></div><div class="c" style="left:1055px;width:60px;"><span class="t" style="transform-origin:0 50%;transform:translateX(0.0px) scaleX(0.7783);">XML</span></div><div class="c" style="left:1115px;width:75px;"></div></div>
<div class="gl" style="top:281px;"></div>
<div class="r" style="top:282px;"><div class="c" style="left:0px;width:75px;"><span class="t" style="transform-origin:0 50%;transform:translateX(0.0px) scaleX(0.9548);">Orlando (FL)</span></div><div class="c" style="left:75px;width:177px;"><span class="t" style="transform-origin:0 50%;transform:translateX(0.0px) scaleX(0.983);">The Avanti Resort</span></div><div class="c" style="left:252px;width:40px;"><span class="t" style="transform-origin:0 50%;transform:translateX(0.0px) scaleX(1.0667);">3.5s<u>...</u></span></div><div class="c" style="left:292px;width:75px;"><span class="t" style="transform-origin:0 50%;transform:translateX(0.0px) scaleX(0.9255);">Room Only</span></div><div class="c" style="left:367px;width:90px;"><span class="t" style="transform-origin:0 50%;transform:translateX(-0.5px) scaleX(0.9517);">Suite King Size <u>...</u></span></div><div class="c" style="left:457px;width:35px;"><span class="t" style="transform-origin:0 50%;transform:translateX(0.0px) scaleX(0.9238);">Mon</span></div><div class="c" style="left:492px;width:68px;"><span class="t" style="transform-origin:0 50%;transform:translateX(-0.5px) scaleX(1.0109);">21/08/2017</span></div><div class="c" style="left:560px;width:35px;"><span class="t" style="transform-origin:0 50%;transform:translateX(-0.5px) scaleX(0.9154);">Fri</span></div><div class="c" style="left:595px;width:68px;"><span class="t" style="transform-origin:0 50%;transform:translateX(-0.5px) scaleX(1.0109);">01/09/2017</span></div><div class="c" style="left:663px;width:62px;"><span class="t" style="transform-origin:0 50%;transform:translateX(-0.5px) scaleX(0.9757);">Bonotel</span></div><div class="c er" style="left:725px;width:25px;"></div><div class="c" style="left:750px;width:25px;"></div><div class="c" style="left:775px;width:25px;"></div><div class="c num" style="left:800px;width:55px;"><span class="t" style="">811.01</span></div><div class="c num" style="left:855px;width:55px;"><span class="t" style="transform-origin:100% 50%;transform:translateX(0.0px) scaleX(0.9706);">405.51</span></div><div class="c num" style="left:910px;width:65px;"><span class="t" style="">811.01</span></div><div class="c num" style="left:975px;width:55px;"><span class="t" style="transform-origin:100% 50%;transform:translateX(0.0px) scaleX(1.0286);">0.00</span></div><div class="c" style="left:1030px;width:25px;"></div><div class="c" style="left:1055px;width:60px;"><span class="t" style="transform-origin:0 50%;transform:translateX(0.0px) scaleX(0.7783);">XML</span></div><div class="c" style="left:1115px;width:75px;"></div></div>
<div class="gl" style="top:296px;"></div>
<div class="r" style="top:297px;"><div class="c" style="left:0px;width:75px;"><span class="t" style="transform-origin:0 50%;transform:translateX(0.0px) scaleX(0.9548);">Orlando (FL)</span></div><div class="c" style="left:75px;width:177px;"><span class="t" style="transform-origin:0 50%;transform:translateX(0.0px) scaleX(0.983);">The Avanti Resort</span></div><div class="c" style="left:252px;width:40px;"><span class="t" style="transform-origin:0 50%;transform:translateX(0.0px) scaleX(1.0667);">3.5s<u>...</u></span></div><div class="c" style="left:292px;width:75px;"><span class="t" style="transform-origin:0 50%;transform:translateX(0.0px) scaleX(0.9255);">Room Only</span></div><div class="c" style="left:367px;width:90px;"><span class="t" style="transform-origin:0 50%;transform:translateX(-0.5px) scaleX(0.9517);">Suite King Size <u>...</u></span></div><div class="c" style="left:457px;width:35px;"><span class="t" style="transform-origin:0 50%;transform:translateX(0.0px) scaleX(0.9238);">Mon</span></div><div class="c" style="left:492px;width:68px;"><span class="t" style="transform-origin:0 50%;transform:translateX(-0.5px) scaleX(1.0109);">21/08/2017</span></div><div class="c" style="left:560px;width:35px;"><span class="t" style="transform-origin:0 50%;transform:translateX(-0.5px) scaleX(0.9154);">Fri</span></div><div class="c" style="left:595px;width:68px;"><span class="t" style="transform-origin:0 50%;transform:translateX(-0.5px) scaleX(1.0109);">01/09/2017</span></div><div class="c" style="left:663px;width:62px;"><span class="t" style="transform-origin:0 50%;transform:translateX(-0.5px) scaleX(0.9757);">Bonotel</span></div><div class="c er" style="left:725px;width:25px;"></div><div class="c" style="left:750px;width:25px;"></div><div class="c" style="left:775px;width:25px;"></div><div class="c num" style="left:800px;width:55px;"><span class="t" style="">811.01</span></div><div class="c num" style="left:855px;width:55px;"><span class="t" style="transform-origin:100% 50%;transform:translateX(0.0px) scaleX(0.9706);">405.51</span></div><div class="c num" style="left:910px;width:65px;"><span class="t" style="">811.01</span></div><div class="c num" style="left:975px;width:55px;"><span class="t" style="transform-origin:100% 50%;transform:translateX(0.0px) scaleX(1.0286);">0.00</span></div><div class="c" style="left:1030px;width:25px;"></div><div class="c" style="left:1055px;width:60px;"><span class="t" style="transform-origin:0 50%;transform:translateX(0.0px) scaleX(0.7783);">XML</span></div><div class="c" style="left:1115px;width:75px;"></div></div>
<div class="gl" style="top:311px;"></div>
<div class="r" style="top:312px;"><div class="c" style="left:0px;width:75px;"><span class="t" style="transform-origin:0 50%;transform:translateX(-1.0px) scaleX(1.0639);">Internation<u>...</u></span></div><div class="c" style="left:75px;width:177px;"><span class="t" style="transform-origin:0 50%;transform:translateX(0.0px) scaleX(0.9833);">Avanti Resort</span></div><div class="c" style="left:252px;width:40px;"><span class="t" style="transform-origin:0 50%;transform:translateX(0.0px) scaleX(1.095);">3.5*</span></div><div class="c" style="left:292px;width:75px;"><span class="t" style="transform-origin:0 50%;transform:translateX(-0.5px) scaleX(0.9746);">Hot Breakfast</span></div><div class="c" style="left:367px;width:90px;"><span class="t" style="transform-origin:0 50%;transform:translateX(-0.5px) scaleX(0.9529);">Deluxe</span></div><div class="c" style="left:457px;width:35px;"><span class="t" style="transform-origin:0 50%;transform:translateX(0.0px) scaleX(0.9238);">Mon</span></div><div class="c" style="left:492px;width:68px;"><span class="t" style="transform-origin:0 50%;transform:translateX(-0.5px) scaleX(1.0109);">21/08/2017</span></div><div class="c" style="left:560px;width:35px;"><span class="t" style="transform-origin:0 50%;transform:translateX(-0.5px) scaleX(0.9154);">Fri</span></div><div class="c" style="left:595px;width:68px;"><span class="t" style="transform-origin:0 50%;transform:translateX(-0.5px) scaleX(1.0109);">01/09/2017</span></div><div class="c" style="left:663px;width:62px;"><span class="t" style="transform-origin:0 50%;transform:translateX(-0.5px) scaleX(1.0229);">Tourico <u>...</u></span></div><div class="c er" style="left:725px;width:25px;"><span class="t" style="">*</span></div><div class="c" style="left:750px;width:25px;"></div><div class="c" style="left:775px;width:25px;"></div><div class="c num" style="left:800px;width:55px;"><span class="t" style="transform-origin:100% 50%;transform:translateX(0.0px) scaleX(0.9706);">909.18</span></div><div class="c num" style="left:855px;width:55px;"><span class="t" style="transform-origin:100% 50%;transform:translateX(0.0px) scaleX(0.9735);">454.59</span></div><div class="c num" style="left:910px;width:65px;"><span class="t" style="transform-origin:100% 50%;transform:translateX(0.0px) scaleX(0.9706);">909.18</span></div><div class="c num" style="left:975px;width:55px;"><span class="t" style="transform-origin:100% 50%;transform:translateX(0.0px) scaleX(1.0286);">0.00</span></div><div class="c" style="left:1030px;width:25px;"></div><div class="c" style="left:1055px;width:60px;"><span class="t" style="transform-origin:0 50%;transform:translateX(0.0px) scaleX(0.7783);">XML</span></div><div class="c" style="left:1115px;width:75px;"></div></div>
<div class="gl" style="top:326px;"></div>
<div class="r" style="top:327px;"><div class="c" style="left:0px;width:75px;"><span class="t" style="transform-origin:0 50%;transform:translateX(-1.0px) scaleX(1.0639);">Internation<u>...</u></span></div><div class="c" style="left:75px;width:177px;"><span class="t" style="transform-origin:0 50%;transform:translateX(0.0px) scaleX(0.9833);">Avanti Resort</span></div><div class="c" style="left:252px;width:40px;"><span class="t" style="transform-origin:0 50%;transform:translateX(0.0px) scaleX(1.095);">3.5*</span></div><div class="c" style="left:292px;width:75px;"><span class="t" style="transform-origin:0 50%;transform:translateX(-0.5px) scaleX(0.9746);">Hot Breakfast</span></div><div class="c" style="left:367px;width:90px;"><span class="t" style="transform-origin:0 50%;transform:translateX(-0.5px) scaleX(0.9529);">Deluxe</span></div><div class="c" style="left:457px;width:35px;"><span class="t" style="transform-origin:0 50%;transform:translateX(0.0px) scaleX(0.9238);">Mon</span></div><div class="c" style="left:492px;width:68px;"><span class="t" style="transform-origin:0 50%;transform:translateX(-0.5px) scaleX(1.0109);">21/08/2017</span></div><div class="c" style="left:560px;width:35px;"><span class="t" style="transform-origin:0 50%;transform:translateX(-0.5px) scaleX(0.9154);">Fri</span></div><div class="c" style="left:595px;width:68px;"><span class="t" style="transform-origin:0 50%;transform:translateX(-0.5px) scaleX(1.0109);">01/09/2017</span></div><div class="c" style="left:663px;width:62px;"><span class="t" style="transform-origin:0 50%;transform:translateX(-0.5px) scaleX(1.0229);">Tourico <u>...</u></span></div><div class="c er" style="left:725px;width:25px;"><span class="t" style="">*</span></div><div class="c" style="left:750px;width:25px;"></div><div class="c" style="left:775px;width:25px;"></div><div class="c num" style="left:800px;width:55px;"><span class="t" style="transform-origin:100% 50%;transform:translateX(0.0px) scaleX(0.9706);">909.18</span></div><div class="c num" style="left:855px;width:55px;"><span class="t" style="transform-origin:100% 50%;transform:translateX(0.0px) scaleX(0.9735);">454.59</span></div><div class="c num" style="left:910px;width:65px;"><span class="t" style="transform-origin:100% 50%;transform:translateX(0.0px) scaleX(0.9706);">909.18</span></div><div class="c num" style="left:975px;width:55px;"><span class="t" style="transform-origin:100% 50%;transform:translateX(0.0px) scaleX(1.0286);">0.00</span></div><div class="c" style="left:1030px;width:25px;"></div><div class="c" style="left:1055px;width:60px;"><span class="t" style="transform-origin:0 50%;transform:translateX(0.0px) scaleX(0.7783);">XML</span></div><div class="c" style="left:1115px;width:75px;"></div></div>
<div class="gl" style="top:341px;"></div>
<div class="r" style="top:342px;"><div class="c" style="left:0px;width:75px;"><span class="t" style="transform-origin:0 50%;transform:translateX(-1.0px) scaleX(1.0639);">Internation<u>...</u></span></div><div class="c" style="left:75px;width:177px;"><span class="t" style="transform-origin:0 50%;transform:translateX(0.0px) scaleX(0.9833);">Avanti Resort</span></div><div class="c" style="left:252px;width:40px;"><span class="t" style="transform-origin:0 50%;transform:translateX(0.0px) scaleX(1.095);">3.5*</span></div><div class="c" style="left:292px;width:75px;"><span class="t" style="transform-origin:0 50%;transform:translateX(-0.5px) scaleX(0.926);">Roomonly</span></div><div class="c" style="left:367px;width:90px;"><span class="t" style="transform-origin:0 50%;transform:translateX(-0.5px) scaleX(0.9529);">Deluxe</span></div><div class="c" style="left:457px;width:35px;"><span class="t" style="transform-origin:0 50%;transform:translateX(0.0px) scaleX(0.9238);">Mon</span></div><div class="c" style="left:492px;width:68px;"><span class="t" style="transform-origin:0 50%;transform:translateX(-0.5px) scaleX(1.0109);">21/08/2017</span></div><div class="c" style="left:560px;width:35px;"><span class="t" style="transform-origin:0 50%;transform:translateX(-0.5px) scaleX(0.9154);">Fri</span></div><div class="c" style="left:595px;width:68px;"><span class="t" style="transform-origin:0 50%;transform:translateX(-0.5px) scaleX(1.0109);">01/09/2017</span></div><div class="c" style="left:663px;width:62px;"><span class="t" style="transform-origin:0 50%;transform:translateX(-0.5px) scaleX(1.0229);">Tourico <u>...</u></span></div><div class="c er" style="left:725px;width:25px;"></div><div class="c" style="left:750px;width:25px;"></div><div class="c" style="left:775px;width:25px;"></div><div class="c num" style="left:800px;width:55px;"><span class="t" style="transform-origin:100% 50%;transform:translateX(0.0px) scaleX(1.0167);">1,866.18</span></div><div class="c num" style="left:855px;width:55px;"><span class="t" style="transform-origin:100% 50%;transform:translateX(0.0px) scaleX(0.9735);">933.09</span></div><div class="c num" style="left:910px;width:65px;"><span class="t" style="transform-origin:100% 50%;transform:translateX(0.0px) scaleX(1.0167);">1,866.18</span></div><div class="c num" style="left:975px;width:55px;"><span class="t" style="transform-origin:100% 50%;transform:translateX(0.0px) scaleX(1.0286);">0.00</span></div><div class="c" style="left:1030px;width:25px;"></div><div class="c" style="left:1055px;width:60px;"><span class="t" style="transform-origin:0 50%;transform:translateX(0.0px) scaleX(0.7783);">XML</span></div><div class="c" style="left:1115px;width:75px;"></div></div>
<div class="gl" style="top:356px;"></div>
<div class="r" style="top:357px;"><div class="c" style="left:0px;width:75px;"><span class="t" style="transform-origin:0 50%;transform:translateX(-1.0px) scaleX(1.0639);">Internation<u>...</u></span></div><div class="c" style="left:75px;width:177px;"><span class="t" style="transform-origin:0 50%;transform:translateX(0.0px) scaleX(0.9833);">Avanti Resort</span></div><div class="c" style="left:252px;width:40px;"><span class="t" style="transform-origin:0 50%;transform:translateX(0.0px) scaleX(1.095);">3.5*</span></div><div class="c" style="left:292px;width:75px;"><span class="t" style="transform-origin:0 50%;transform:translateX(-0.5px) scaleX(0.926);">Roomonly</span></div><div class="c" style="left:367px;width:90px;"><span class="t" style="transform-origin:0 50%;transform:translateX(-0.5px) scaleX(0.9529);">Deluxe</span></div><div class="c" style="left:457px;width:35px;"><span class="t" style="transform-origin:0 50%;transform:translateX(0.0px) scaleX(0.9238);">Mon</span></div><div class="c" style="left:492px;width:68px;"><span class="t" style="transform-origin:0 50%;transform:translateX(-0.5px) scaleX(1.0109);">21/08/2017</span></div><div class="c" style="left:560px;width:35px;"><span class="t" style="transform-origin:0 50%;transform:translateX(-0.5px) scaleX(0.9154);">Fri</span></div><div class="c" style="left:595px;width:68px;"><span class="t" style="transform-origin:0 50%;transform:translateX(-0.5px) scaleX(1.0109);">01/09/2017</span></div><div class="c" style="left:663px;width:62px;"><span class="t" style="transform-origin:0 50%;transform:translateX(-0.5px) scaleX(1.0229);">Tourico <u>...</u></span></div><div class="c er" style="left:725px;width:25px;"></div><div class="c" style="left:750px;width:25px;"></div><div class="c" style="left:775px;width:25px;"></div><div class="c num" style="left:800px;width:55px;"><span class="t" style="transform-origin:100% 50%;transform:translateX(0.0px) scaleX(1.0167);">1,866.18</span></div><div class="c num" style="left:855px;width:55px;"><span class="t" style="transform-origin:100% 50%;transform:translateX(0.0px) scaleX(0.9735);">933.09</span></div><div class="c num" style="left:910px;width:65px;"><span class="t" style="transform-origin:100% 50%;transform:translateX(0.0px) scaleX(1.0167);">1,866.18</span></div><div class="c num" style="left:975px;width:55px;"><span class="t" style="transform-origin:100% 50%;transform:translateX(0.0px) scaleX(1.0286);">0.00</span></div><div class="c" style="left:1030px;width:25px;"></div><div class="c" style="left:1055px;width:60px;"><span class="t" style="transform-origin:0 50%;transform:translateX(0.0px) scaleX(0.7783);">XML</span></div><div class="c" style="left:1115px;width:75px;"></div></div>
<div class="gl" style="top:371px;"></div>
<div class="r" style="top:372px;"><div class="c" style="left:0px;width:75px;"><span class="t" style="transform-origin:0 50%;transform:translateX(-1.0px) scaleX(1.0639);">Internation<u>...</u></span></div><div class="c" style="left:75px;width:177px;"><span class="t" style="transform-origin:0 50%;transform:translateX(0.0px) scaleX(0.9833);">Avanti Resort</span></div><div class="c" style="left:252px;width:40px;"><span class="t" style="transform-origin:0 50%;transform:translateX(0.0px) scaleX(1.095);">3.5*</span></div><div class="c" style="left:292px;width:75px;"><span class="t" style="transform-origin:0 50%;transform:translateX(-0.5px) scaleX(0.926);">Roomonly</span></div><div class="c" style="left:367px;width:90px;"><span class="t" style="transform-origin:0 50%;transform:translateX(-0.5px) scaleX(0.9759);">Superior Doubl<u>...</u></span></div><div class="c" style="left:457px;width:35px;"><span class="t" style="transform-origin:0 50%;transform:translateX(0.0px) scaleX(0.9238);">Mon</span></div><div class="c" style="left:492px;width:68px;"><span class="t" style="transform-origin:0 50%;transform:translateX(-0.5px) scaleX(1.0109);">21/08/2017</span></div><div class="c" style="left:560px;width:35px;"><span class="t" style="transform-origin:0 50%;transform:translateX(-0.5px) scaleX(0.9154);">Fri</span></div><div class="c" style="left:595px;width:68px;"><span class="t" style="transform-origin:0 50%;transform:translateX(-0.5px) scaleX(1.0109);">01/09/2017</span></div><div class="c" style="left:663px;width:62px;"><span class="t" style="transform-origin:0 50%;transform:translateX(-0.5px) scaleX(1.0229);">Tourico <u>...</u></span></div><div class="c er" style="left:725px;width:25px;"></div><div class="c" style="left:750px;width:25px;"></div><div class="c" style="left:775px;width:25px;"></div><div class="c num" style="left:800px;width:55px;"><span class="t" style="transform-origin:100% 50%;transform:translateX(0.0px) scaleX(1.0357);">2,011.00</span></div><div class="c num" style="left:855px;width:55px;"><span class="t" style="transform-origin:100% 50%;transform:translateX(0.0px) scaleX(1.0286);">1,005.50</span></div><div class="c num" style="left:910px;width:65px;"><span class="t" style="transform-origin:100% 50%;transform:translateX(0.0px) scaleX(1.0357);">2,011.00</span></div><div class="c num" style="left:975px;width:55px;"><span class="t" style="transform-origin:100% 50%;transform:translateX(0.0px) scaleX(1.0286);">0.00</span></div><div class="c" style="left:1030px;width:25px;"></div><div class="c" style="left:1055px;width:60px;"><span class="t" style="transform-origin:0 50%;transform:translateX(0.0px) scaleX(0.7783);">XML</span></div><div class="c" style="left:1115px;width:75px;"></div></div>
<div class="gl" style="top:386px;"></div>
<div class="r" style="top:387px;"><div class="c" style="left:0px;width:75px;"><span class="t" style="transform-origin:0 50%;transform:translateX(-1.0px) scaleX(1.0639);">Internation<u>...</u></span></div><div class="c" style="left:75px;width:177px;"><span class="t" style="transform-origin:0 50%;transform:translateX(0.0px) scaleX(0.9833);">Avanti Resort</span></div><div class="c" style="left:252px;width:40px;"><span class="t" style="transform-origin:0 50%;transform:translateX(0.0px) scaleX(1.095);">3.5*</span></div><div class="c" style="left:292px;width:75px;"><span class="t" style="transform-origin:0 50%;transform:translateX(-0.5px) scaleX(0.926);">Roomonly</span></div><div class="c" style="left:367px;width:90px;"><span class="t" style="transform-origin:0 50%;transform:translateX(-0.5px) scaleX(0.9759);">Superior Doubl<u>...</u></span></div><div class="c" style="left:457px;width:35px;"><span class="t" style="transform-origin:0 50%;transform:translateX(0.0px) scaleX(0.9238);">Mon</span></div><div class="c" style="left:492px;width:68px;"><span class="t" style="transform-origin:0 50%;transform:translateX(-0.5px) scaleX(1.0109);">21/08/2017</span></div><div class="c" style="left:560px;width:35px;"><span class="t" style="transform-origin:0 50%;transform:translateX(-0.5px) scaleX(0.9154);">Fri</span></div><div class="c" style="left:595px;width:68px;"><span class="t" style="transform-origin:0 50%;transform:translateX(-0.5px) scaleX(1.0109);">01/09/2017</span></div><div class="c" style="left:663px;width:62px;"><span class="t" style="transform-origin:0 50%;transform:translateX(-0.5px) scaleX(1.0229);">Tourico <u>...</u></span></div><div class="c er" style="left:725px;width:25px;"></div><div class="c" style="left:750px;width:25px;"></div><div class="c" style="left:775px;width:25px;"></div><div class="c num" style="left:800px;width:55px;"><span class="t" style="transform-origin:100% 50%;transform:translateX(0.0px) scaleX(1.0357);">2,011.00</span></div><div class="c num" style="left:855px;width:55px;"><span class="t" style="transform-origin:100% 50%;transform:translateX(0.0px) scaleX(1.0286);">1,005.50</span></div><div class="c num" style="left:910px;width:65px;"><span class="t" style="transform-origin:100% 50%;transform:translateX(0.0px) scaleX(1.0357);">2,011.00</span></div><div class="c num" style="left:975px;width:55px;"><span class="t" style="transform-origin:100% 50%;transform:translateX(0.0px) scaleX(1.0286);">0.00</span></div><div class="c" style="left:1030px;width:25px;"></div><div class="c" style="left:1055px;width:60px;"><span class="t" style="transform-origin:0 50%;transform:translateX(0.0px) scaleX(0.7783);">XML</span></div><div class="c" style="left:1115px;width:75px;"></div></div>
<div class="gl" style="top:401px;"></div>
</div>
</div>
</body>
</html>
